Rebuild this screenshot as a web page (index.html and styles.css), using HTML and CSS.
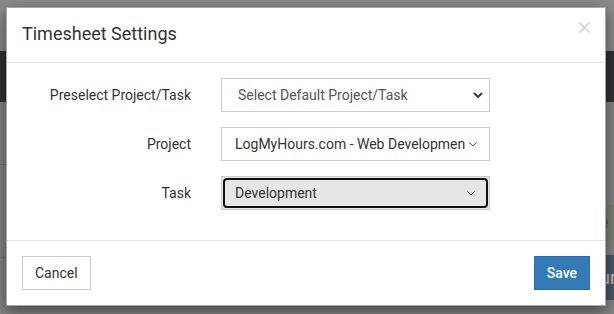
FILE: index.html
```html
<!DOCTYPE html>
<html lang="en">
<head>
    <meta charset="UTF-8">
    <meta name="viewport" content="width=device-width, initial-scale=1.0">
    <title>Timesheet Settings</title>
    <link rel="stylesheet" href="styles.css">
</head>
<body>
    <!-- page behind the dimmed backdrop -->
    <div class="page">
        <div class="page-top"></div>
        <div class="page-nav"></div>
        <div class="page-main">
            <div class="page-content">
                <div class="page-row first"></div>
                <div class="page-row second"></div>
            </div>
            <div class="page-side">
                <div class="side-alert">e</div>
                <div class="side-btn">ur</div>
            </div>
        </div>
    </div>

    <div class="modal">
        <div class="modal-header">
            <h4 class="modal-title">Timesheet Settings</h4>
            <span class="close">
                <svg width="11" height="11" viewBox="0 0 11 11"><path d="M0.5 0.5 L10.5 10.5 M10.5 0.5 L0.5 10.5" stroke="#c9c9c9" stroke-width="1.3" fill="none"/></svg>
            </span>
        </div>

        <div class="modal-body">
            <div class="form-grid">
                <label class="control-label">Preselect Project/Task</label>
                <div class="select select-default">
                    <span class="select-text">Select Default Project/Task</span>
                    <svg class="chev-bold" width="10" height="6" viewBox="0 0 10 6"><path d="M1 1 L5 5 L9 1" stroke="#3a3a3a" stroke-width="2" fill="none"/></svg>
                </div>

                <label class="control-label">Project</label>
                <div class="select">
                    <span class="select-text">LogMyHours.com - Web Developmen</span>
                    <svg class="chev" width="8" height="5" viewBox="0 0 8 5"><path d="M0.5 0.5 L4 4 L7.5 0.5" stroke="#555" stroke-width="1" fill="none"/></svg>
                </div>

                <label class="control-label">Task</label>
                <div class="select focused">
                    <span class="select-text">Development</span>
                    <svg class="chev" width="8" height="5" viewBox="0 0 8 5"><path d="M0.5 0.5 L4 4 L7.5 0.5" stroke="#555" stroke-width="1" fill="none"/></svg>
                </div>
            </div>
        </div>

        <div class="modal-footer">
            <button class="btn btn-default">Cancel</button>
            <button class="btn btn-primary">Save</button>
        </div>
    </div>
</body>
</html>
```

FILE: styles.css
```css
body {
    margin: 0;
    width: 614px;
    height: 314px;
    overflow: hidden;
    background-color: #858585;
    font-family: Roboto, "Liberation Sans", sans-serif;
    font-size: 14px;
    color: #333;
}

.page-top {
    height: 51px;
    background-color: #8b8b8b;
}

.page-nav {
    height: 51px;
    background-color: #2f3236;
}

.page-main {
    display: flex;
    height: 212px;
}

.page-content {
    flex: 1;
}

.page-row.first {
    height: 62px;
    border-bottom: 1px solid #777;
}

.page-row.second {
    height: 92px;
    border-bottom: 1px solid #777;
}

.page-side {
    width: 22px;
    display: flex;
    flex-direction: column;
}

.side-alert {
    margin-top: 103px;
    height: 35px;
    background-color: #7c8274;
    color: #4e5a44;
    font-size: 16px;
    line-height: 35px;
    padding-left: 8px;
}

.side-btn {
    margin-top: 15px;
    height: 45px;
    background-color: #4b5666;
    color: #c6ccd4;
    font-size: 18px;
    line-height: 45px;
    padding-left: 8px;
}

.modal {
    position: absolute;
    top: 7px;
    left: 6px;
    width: 598px;
    background-color: white;
    border: 1px solid rgba(0,0,0,0.35);
    box-shadow: 0 5px 15px rgba(0,0,0,0.5);
}

.modal-header {
    padding: 13px 15px 15px;
    border-bottom: 1px solid #e5e5e5;
    display: flex;
    justify-content: space-between;
    align-items: flex-start;
}

.modal-title {
    margin: 0;
    font-size: 18px;
    font-weight: normal;
    line-height: 26px;
    color: #333;
}

.close {
    margin-top: 1px;
    line-height: 0;
}

.modal-body {
    padding: 15px;
}

.form-grid {
    display: grid;
    grid-template-columns: 169px 269px;
    column-gap: 30px;
    row-gap: 15px;
    align-items: center;
    margin-bottom: 15px;
}

.control-label {
    text-align: right;
    font-size: 14px;
    color: #333;
}

.select {
    position: relative;
    height: 34px;
    box-sizing: border-box;
    border: 1px solid #ccc;
    display: flex;
    align-items: center;
    padding: 0 12px 0 13px;
    font-size: 14px;
    color: #333;
    overflow: hidden;
}

.select-text {
    flex: 1;
    white-space: nowrap;
    overflow: hidden;
}

.select-default {
    padding-left: 16px;
    padding-right: 6px;
    color: #555;
}

.select .chev {
    flex-shrink: 0;
    margin-left: 3px;
}

.select.focused {
    background-color: #e6e6e6;
}

.select.focused::after {
    content: "";
    position: absolute;
    top: 1px;
    left: 1px;
    right: 1px;
    bottom: 1px;
    border: 2px solid #111;
    border-radius: 4px;
}

.select.focused .chev {
    margin-right: 2px;
}

.modal-footer {
    padding: 15px;
    border-top: 1px solid #e5e5e5;
    display: flex;
    justify-content: space-between;
}

.btn {
    height: 34px;
    padding: 6px 12px;
    font-family: Roboto, "Liberation Sans", sans-serif;
    font-size: 14px;
    line-height: 20px;
    border: 1px solid #ccc;
    border-radius: 0;
    background-color: white;
    color: #333;
}

.btn-primary {
    background-color: #337ab7;
    border-color: #2e6da4;
    color: white;
    font-weight: 500;
}
```
